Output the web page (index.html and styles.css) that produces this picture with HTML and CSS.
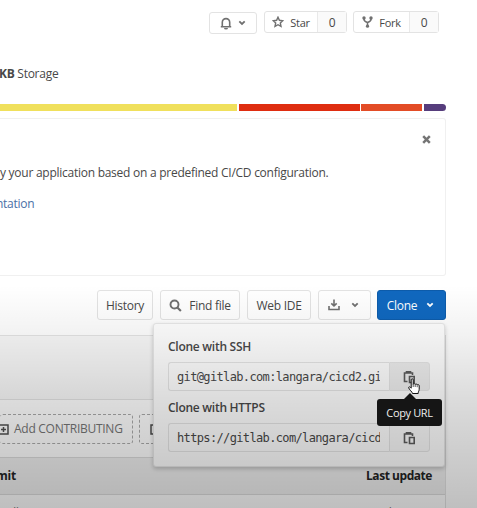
FILE: index.html
```html
<!DOCTYPE html>
<html lang="en">
<head>
<meta charset="utf-8">
<title>Project</title>
<link rel="stylesheet" href="styles.css">
</head>
<body>
<main class="page">
  <div class="actions">
    <button class="btn small bell">
      <svg width="12" height="13" viewBox="0 0 12 13"><path d="M2.300 9.500V5.300a3.700 3.700 0 0 1 7.400 0v4.200M.8 9.800h10.400" fill="none" stroke="currentColor" stroke-width="1.600"/><path d="M4 11h4a2 1.500 0 0 1-4 0z" fill="currentColor"/></svg>
      <svg class="chev" width="8" height="6" viewBox="0 0 8 6"><path d="M1.300 1.400 4 4l2.700-2.600"/></svg>
    </button>
    <div class="btn small group star"><span class="label"><svg width="12" height="12" viewBox="0 0 12 12"><path d="m6 1.200 1.400 3.100 3.400.4-2.500 2.300.7 3.400L6 8.700l-3 1.700.7-3.400L1.200 4.700l3.400-.4z" fill="none" stroke="currentColor" stroke-width="1.400"/></svg><span class="t">Star</span></span><span class="count">0</span></div>
    <div class="btn small group fork"><span class="label"><svg width="11" height="12" viewBox="0 0 11 12"><path d="M2 2v1.200Q2 5.300 5.500 6.500 9 5.300 9 3.200V2M5.500 6.200V10" fill="none" stroke="currentColor" stroke-width="1.600"/><g fill="currentColor"><circle cx="2" cy="2" r="1.700"/><circle cx="9" cy="2" r="1.700"/><circle cx="5.500" cy="10.200" r="1.600"/></g></svg><span class="t">Fork</span></span><span class="count">0</span></div>
  </div>
  <p class="storage"><b>KB</b> Storage</p>
  <div class="langs"><i class="js"></i><i class="ng"></i><i class="html"></i><i class="css"></i></div>
  <section class="card">
    <button class="close" aria-label="Close"><svg width="9" height="9" viewBox="0 0 9 9"><path d="m1.200 1.200 6.600 6.600m0-6.600L1.200 7.800" stroke="currentColor" stroke-width="2.500"/></svg></button>
    <p class="desc">y your application based on a predefined CI/CD configuration.</p>
    <a class="link">ntation</a>
  </section>
  <div class="toolbar">
    <button class="btn history"><span class="t">History</span></button>
    <button class="btn find"><svg width="13" height="13" viewBox="0 0 13 13"><circle cx="5.500" cy="5.500" r="4" fill="none" stroke="currentColor" stroke-width="1.900"/><path d="m8.400 8.400 3.500 3.600" stroke="currentColor" stroke-width="2.100"/></svg><span class="t">Find file</span></button>
    <button class="btn ide"><span class="t">Web IDE</span></button>
    <button class="btn download"><svg width="12" height="12" viewBox="0 0 12 12"><path d="M6 .5v6M3.300 4.400 6 7l2.700-2.600M1 7v3.500h10V7" fill="none" stroke="currentColor" stroke-width="1.600"/></svg><svg class="chev" width="8" height="6" viewBox="0 0 8 6"><path d="M1.300 1.400 4 4l2.700-2.600"/></svg></button>
    <button class="btn clone"><span class="t">Clone</span><svg class="chev" width="8" height="6" viewBox="0 0 8 6"><path d="M1.300 1.400 4 4l2.700-2.600"/></svg></button>
  </div>
  <section class="files">
    <div class="commit"></div>
    <div class="suggest">
      <a class="dashed first"><svg width="11" height="11" viewBox="0 0 11 11"><path d="M1 1h9v9H1zM5.500 3v5M3 5.500h5" fill="none" stroke="currentColor" stroke-width="1.500"/></svg><span class="t">Add CONTRIBUTING</span></a>
      <a class="dashed second"><svg width="11" height="11" viewBox="0 0 11 11"><path d="M1 1h9v9H1zM5.500 3v5M3 5.500h5" fill="none" stroke="currentColor" stroke-width="1.500"/></svg></a>
    </div>
    <div class="thead"><b class="mit">mit</b><b class="last">Last update</b></div>
    <div class="row"><i>ll</i><span>5 days ago</span></div>
  </section>
</main>
<div class="popover">
  <h4>Clone with SSH</h4>
  <div class="field"><span class="url">git@gitlab.com:langara/cicd2.gi</span><button class="copy hover"><svg width="13" height="14" viewBox="0 0 13 14"><path d="M4.500 11.500H1.500V3h8v2M3.500 3V1.700h4V3" fill="none" stroke="currentColor" stroke-width="1.600"/><path d="M6.500 6.500h4.700v6H6.500z" fill="none" stroke="currentColor" stroke-width="1.600"/></svg></button></div>
  <h4>Clone with HTTPS</h4>
  <div class="field"><span class="url">https://gitlab.com/langara/cicd2</span><button class="copy"><svg width="13" height="14" viewBox="0 0 13 14"><path d="M4.500 11.500H1.500V3h8v2M3.500 3V1.700h4V3" fill="none" stroke="currentColor" stroke-width="1.600"/><path d="M6.500 6.500h4.700v6H6.500z" fill="none" stroke="currentColor" stroke-width="1.600"/></svg></button></div>
</div>
<div class="shade"></div>
<div class="tooltip"><span class="t">Copy URL</span></div>
<svg class="cursor" width="13" height="17" viewBox="0 0 13 17"><path d="M3.200 1.800c0-1.400 2-1.400 2 0v4.400c.3-.9 1.900-.7 2 .3.400-.8 1.800-.6 2 .4.500-.7 2-.3 2 .8v3.600c0 1.500-1 2.200-1 4.200H4.500c0-1.500-3.500-4-3.800-5.700-.3-1.200 1.200-1.500 2.500.4z" fill="#fff" stroke="#111" stroke-width="1"/><path d="M5.200 6v3M7.200 6.700V9M9.200 7.200V9.200" stroke="#111" stroke-width=".7"/></svg>
</body>
</html>
```
FILE: styles.css
```css
* { box-sizing: border-box; }
body {
  margin: 0;
  width: 477px;
  height: 508px;
  overflow: hidden;
  position: relative;
  background: #fff;
  color: #484848;
  font: 12px/18px "Open Sans", "Noto Sans", sans-serif;
  letter-spacing: -0.27px;
}
button { font: inherit; letter-spacing: inherit; padding: 0; }
p, h4 { margin: 0; }
svg { flex: none; display: block; }
.t { white-space: nowrap; }
.page { width: 446px; height: 508px; overflow: hidden; }
.btn {
  display: flex;
  align-items: center;
  justify-content: center;
  height: 30px;
  border: 1px solid #e3e3e3;
  border-radius: 3px;
  background: #fff;
  color: #484848;
}
.btn svg { color: #707070; }
.btn .t { padding-top: 1px; }
.chev path { fill: none; stroke: currentColor; stroke-width: 1.8; }
.actions {
  display: flex;
  gap: 7px;
  padding: 11px 7px 0 209px;
  height: 65px;
}
.small { height: 22px; font-size: 11px; }
.bell { width: 48px; gap: 6px; margin-top: 1px; }
.star { width: 83px; }
.fork { width: 86px; margin-left: -1px; }
.label { flex: 1; display: flex; align-items: center; justify-content: center; gap: 6px; }
.count {
  width: 29px;
  height: 100%;
  border-left: 1px solid #e9e9e9;
  background: #fafafa;
  text-align: center;
  line-height: 21px;
  font-size: 12px;
}
.storage { height: 39px; }
.storage b { margin-left: -1px; }
.langs {
  display: flex;
  gap: 1.5px;
  height: 7px;
  border-radius: 0 4px 4px 0;
  overflow: hidden;
}
.js { width: 237px; background: #f0e05c; }
.ng { width: 121px; background: #df2d10; }
.html { width: 61px; background: #e34c26; }
.css { flex: 1; background: #563d7c; }
.card {
  margin-top: 7px;
  height: 158px;
  border: 1px solid #f0f0f0;
  border-left: 0;
  border-radius: 0 3px 3px 0;
}
.close {
  display: block;
  margin: 16px 14px 0 auto;
  border: 0;
  background: none;
  color: #757575;
}
.desc { margin-top: 20px; white-space: nowrap; letter-spacing: -0.26px; }
.link { display: block; margin-top: 13px; margin-left: -4px; color: #4a70a6; }
.toolbar { display: flex; gap: 7px; padding: 14px 0 0 97px; height: 59px; }
.history { width: 56px; }
.find { width: 80px; gap: 7px; }
.ide { width: 64px; }
.download { width: 53px; gap: 11px; margin-right: -1px; padding-right: 2px; }
.clone { width: 69px; gap: 9px; padding-right: 2px; background: #1068bf; border-color: #0d5cab; color: #fff; }
.clone svg { color: #fff; }
.files { border-right: 1px solid #e3e3e3; }
.commit { height: 65px; background: #f8f8f8; border: solid #e4e4e4; border-width: 1px 0; }
.suggest { display: flex; gap: 6px; height: 57px; padding-top: 14px; }
.dashed {
  display: flex;
  align-items: center;
  height: 30px;
  border: 1px dashed #aaa;
  border-radius: 3px;
  color: #757575;
}
.dashed svg { color: #505050; }
.first { width: 133px; border-left: 0; gap: 5px; }
.first svg { margin-left: -2px; }
.second { width: 100px; padding-left: 10px; }
.thead {
  display: flex;
  justify-content: space-between;
  align-items: center;
  height: 38px;
  padding-right: 13px;
  background: #f0f0f0;
  border: solid #dcdcdc;
  border-width: 1px 0;
  color: #242424;
}
.mit { margin-left: -4px; }
.last { letter-spacing: -0.45px; }
.row { display: flex; justify-content: space-between; padding: 9px 0 0 12px; color: #777; }
.row span { width: 70px; }
.popover {
  position: absolute;
  left: 153px;
  top: 323px;
  width: 292px;
  height: 144px;
  padding: 14px 14px 0;
  background: #fff;
  border: 1px solid #e8e8e8;
  border-radius: 3px;
  box-shadow: 0 2px 4px rgba(0, 0, 0, .2);
}
.popover h4 { font-size: 12px; font-weight: 600; line-height: 18px; height: 24px; }
.field { display: flex; height: 29px; margin-bottom: 8px; width: 262px; }
.url {
  width: 221px;
  padding-left: 8px;
  padding-right: 9px;
  border: 1px solid #e6e6e6;
  border-right: 0;
  border-radius: 3px 0 0 3px;
  font: 12px/28px "DejaVu Sans Mono", monospace;
  letter-spacing: -0.64px;
  white-space: nowrap;
  overflow: hidden;
  overflow: clip;
  overflow-clip-margin: content-box;
}
.copy {
  display: flex;
  align-items: center;
  justify-content: center;
  width: 41px;
  border: 1px solid #e6e6e6;
  border-radius: 0 3px 3px 0;
  background: #fafafa;
  color: #5c5c5c;
}
.hover { background: #eee; }
.shade {
  position: absolute;
  inset: 285px 0 0;
  background: linear-gradient(rgba(0,0,0,0), rgba(0,0,0,.05) 22%, rgba(0,0,0,.14) 52%, rgba(0,0,0,.25));
  pointer-events: none;
}
.tooltip {
  position: absolute;
  left: 377px;
  top: 399px;
  width: 65px;
  height: 27px;
  border-radius: 3px;
  background: #151515;
  color: #eee;
  font-size: 11px;
  letter-spacing: -0.35px;
  line-height: 27px;
  text-align: center;
}
.tooltip::before {
  content: "";
  position: absolute;
  left: 27px;
  top: -6px;
  border: solid transparent;
  border-width: 0 6px 6px;
  border-bottom-color: #151515;
}
.cursor { position: absolute; left: 408px; top: 378px; }
```
